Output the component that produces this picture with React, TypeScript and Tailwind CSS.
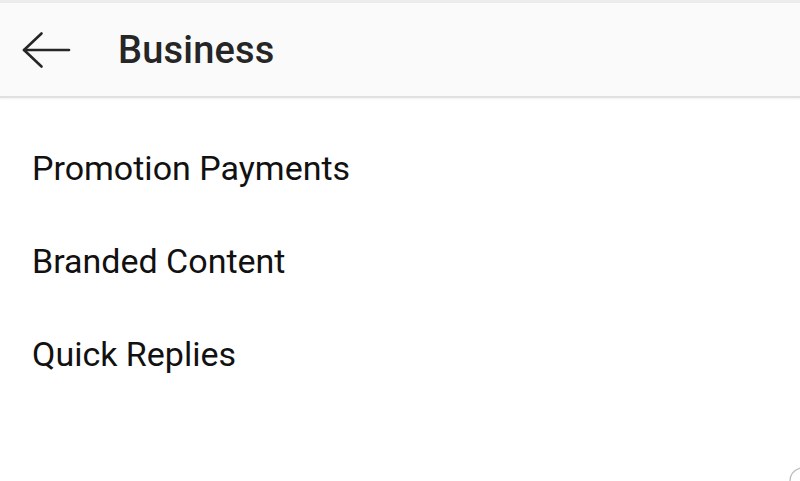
import React from "react";

const items = ["Promotion Payments", "Branded Content", "Quick Replies"];

export default function App() {
  return (
    <div
      className="relative h-[481px] w-[800px] overflow-hidden bg-white text-[#262626]"
      style={{ fontFamily: "Roboto, 'Noto Sans', sans-serif" }}
    >
      <div className="h-[3px] bg-[#ececec]" />
      <header className="flex h-[95px] items-center border-b-2 border-[#e0e0e0] bg-[#fafafa] shadow-[0_1px_2px_rgba(0,0,0,0.06)]">
        <button type="button" className="ml-[21px] flex h-[40px] w-[50px] items-center">
          <svg width="50" height="40" viewBox="21 30 50 40" fill="none" stroke="#262626" strokeWidth="2.6" strokeLinecap="round" strokeLinejoin="round">
            <path d="M69 50H24" />
            <path d="M41.5 33.5L24 50l17.5 16.5" />
          </svg>
        </button>
        <h1 className="ml-[47px] text-[38px] font-medium leading-none tracking-[0.2px]">Business</h1>
      </header>
      <ul className="pt-[50px]">
        {items.map((label) => (
          <li key={label} className="flex h-[93px] items-start pl-[32px] text-[34px] leading-[40px] text-[#111]">
            {label}
          </li>
        ))}
      </ul>
      <svg className="absolute bottom-0 right-0" width="12" height="18" viewBox="0 0 12 18" fill="none">
        <path d="M2 18C2 12 5 7.5 12 5" stroke="#bdbdbd" strokeWidth="1.3" />
      </svg>
    </div>
  );
}
